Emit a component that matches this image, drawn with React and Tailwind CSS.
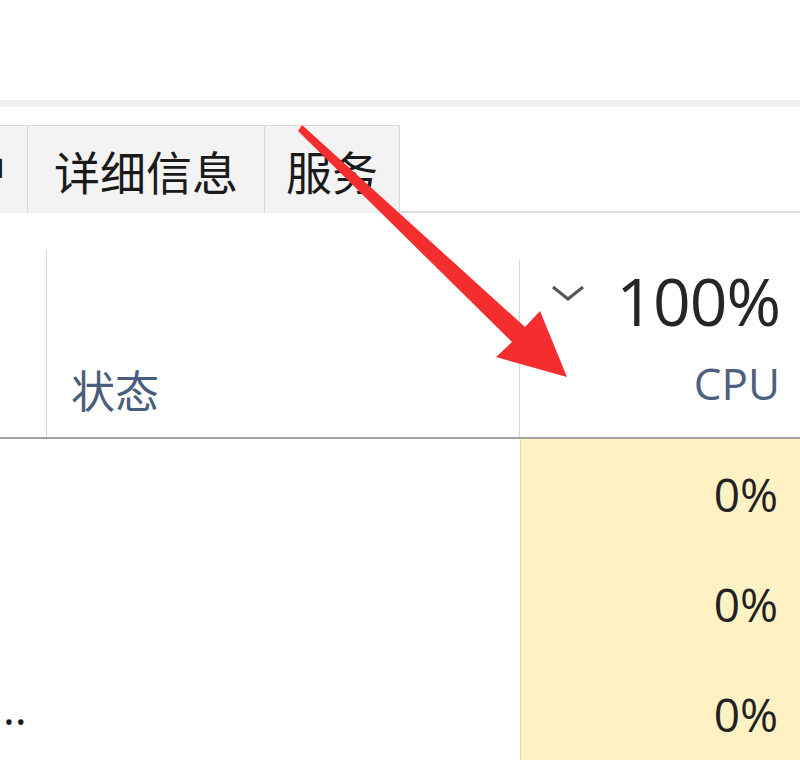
import React from 'react';

const rows = ['0%', '0%', '0%'];

export default function App() {
  return (
    <div className="relative w-[800px] h-[760px] overflow-hidden bg-white font-['Segoe_UI','Open_Sans','Noto_Sans_CJK_SC',sans-serif]">
      {/* window top */}
      <div className="h-[100px]" />
      <div className="h-[7px] bg-[#efefef]" />
      <div className="h-[18px]" />

      {/* tab strip */}
      <div className="flex h-[88px]">
        <div className="w-[28px] overflow-hidden flex justify-end items-center bg-[#f3f3f3] border-t border-r border-[#dadada]">
          <span className="shrink-0 mr-[18px] text-[46px] leading-none text-[#1a1a1a] font-['Noto_Sans_CJK_SC',sans-serif]">用户</span>
        </div>
        <div className="w-[237px] flex items-center justify-center bg-[#f3f3f3] border-t border-r border-[#dadada]">
          <span className="text-[46px] leading-none text-[#1a1a1a] font-['Noto_Sans_CJK_SC',sans-serif]">详细信息</span>
        </div>
        <div className="w-[135px] flex items-center justify-center bg-[#f3f3f3] border-t border-r border-[#dadada]">
          <span className="text-[46px] leading-none text-[#1a1a1a] font-['Noto_Sans_CJK_SC',sans-serif]">服务</span>
        </div>
        <div className="flex-1 border-b-2 border-[#dcdcdc]" />
      </div>

      {/* column header */}
      <div className="flex h-[226px] border-b-2 border-[#a3a3a3]">
        <div className="w-[47px] flex flex-col justify-end">
          <div className="h-[187px] border-r border-[#d6d6d6]" />
        </div>
        <div className="w-[473px] flex flex-col justify-end">
          <div className="h-[176px] border-r border-[#d6d6d6] flex items-end pl-[24px] pb-[26px]">
            <span className="text-[44px] leading-none text-[#4b5d7c] font-['Noto_Sans_CJK_SC',sans-serif]">状态</span>
          </div>
        </div>
        <div className="flex-1 flex flex-col items-end pr-[20px] pt-[54px]">
          <div className="flex items-center gap-[30px]">
            <svg width="36" height="20" viewBox="0 0 36 20" className="mt-[-14px]">
              <path d="M3 4 L18 16 L33 4" fill="none" stroke="#555" strokeWidth="3" />
            </svg>
            <span className="text-[66px] leading-none text-[#262626] tracking-[-1px]">100%</span>
          </div>
          <span className="mt-[28px] text-[44px] leading-none text-[#4d6080]">CPU</span>
        </div>
      </div>

      {/* rows */}
      {rows.map((v, i) => (
        <div key={i} className="flex h-[110px]">
          <div className="w-[520px] flex items-center">
            {i === 2 && (
              <span className="ml-[-9px] mt-[-14px] text-[46px] leading-none text-[#1a1a1a]">…</span>
            )}
          </div>
          <div className="flex-1 bg-[#fef1c3] border-l border-[#e2d7ae] flex items-center justify-end pr-[22px]">
            <span className="text-[46px] leading-none text-[#222]">{v}</span>
          </div>
        </div>
      ))}

      {/* red annotation arrow */}
      <svg className="absolute left-0 top-0 pointer-events-none" width="800" height="760">
        <polygon
          points="302,125 525,327 540,311 567,377 496,357 512,342 298,131"
          fill="#f42e2e"
        />
      </svg>
    </div>
  );
}
